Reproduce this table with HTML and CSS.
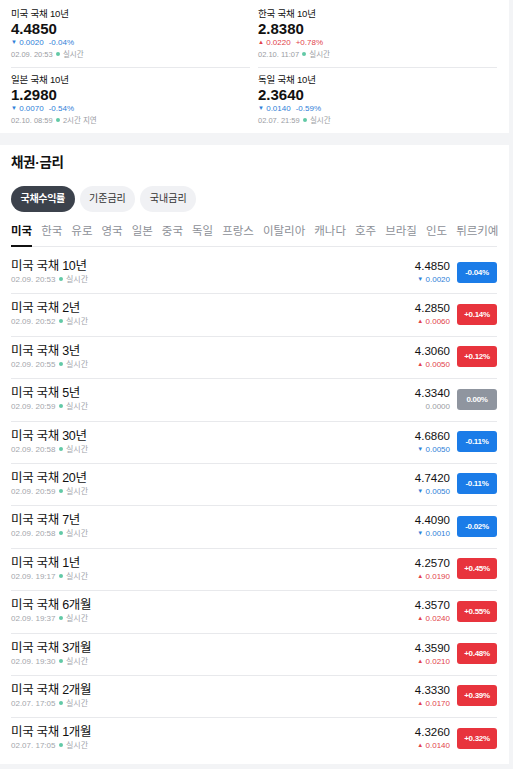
FILE: index.html
```html
<!DOCTYPE html>
<html lang="ko">
<head>
<meta charset="utf-8">
<link rel="stylesheet" href="styles.css">
</head>
<body>
<div class="card top">
  <div class="top-grid">
    <div class="top-item">
      <div class="t-title">미국 국채 10년</div>
      <div class="t-price">4.4850</div>
      <div class="t-chg down"><span class="tri">▼</span> 0.0020<span class="pct">-0.04%</span></div>
      <div class="t-time">02.09. 20:53 <span class="dot"></span> 실시간</div>
    </div>
    <div class="top-item">
      <div class="t-title">한국 국채 10년</div>
      <div class="t-price">2.8380</div>
      <div class="t-chg up"><span class="tri">▲</span> 0.0220<span class="pct">+0.78%</span></div>
      <div class="t-time">02.10. 11:07 <span class="dot"></span> 실시간</div>
    </div>
    <div class="top-item second">
      <div class="t-title">일본 국채 10년</div>
      <div class="t-price">1.2980</div>
      <div class="t-chg down"><span class="tri">▼</span> 0.0070<span class="pct">-0.54%</span></div>
      <div class="t-time">02.10. 08:59 <span class="dot"></span> 2시간 지연</div>
    </div>
    <div class="top-item second">
      <div class="t-title">독일 국채 10년</div>
      <div class="t-price">2.3640</div>
      <div class="t-chg down"><span class="tri">▼</span> 0.0140<span class="pct">-0.59%</span></div>
      <div class="t-time">02.07. 21:59 <span class="dot"></span> 실시간</div>
    </div>
  </div>
</div>
<div class="card main">
  <h2 class="heading">채권·금리</h2>
  <div class="pills">
    <span class="pill active">국채수익률</span>
    <span class="pill">기준금리</span>
    <span class="pill">국내금리</span>
  </div>
  <div class="tabs">
    <span class="tab active">미국</span>
    <span class="tab">한국</span>
    <span class="tab">유로</span>
    <span class="tab">영국</span>
    <span class="tab">일본</span>
    <span class="tab">중국</span>
    <span class="tab">독일</span>
    <span class="tab">프랑스</span>
    <span class="tab">이탈리아</span>
    <span class="tab">캐나다</span>
    <span class="tab">호주</span>
    <span class="tab">브라질</span>
    <span class="tab">인도</span>
    <span class="tab">튀르키예</span>
  </div>
  <ul class="list">
    <li class="row"><div class="r-left"><div class="r-title">미국 국채 10년</div><div class="r-time">02.09. 20:53 <span class="dot"></span> 실시간</div></div><div class="r-right"><div class="r-price">4.4850</div><div class="r-chg down"><span class="tri">▼</span> 0.0020</div></div><span class="badge b-down">-0.04%</span></li>
    <li class="row"><div class="r-left"><div class="r-title">미국 국채 2년</div><div class="r-time">02.09. 20:52 <span class="dot"></span> 실시간</div></div><div class="r-right"><div class="r-price">4.2850</div><div class="r-chg up"><span class="tri">▲</span> 0.0060</div></div><span class="badge b-up">+0.14%</span></li>
    <li class="row"><div class="r-left"><div class="r-title">미국 국채 3년</div><div class="r-time">02.09. 20:55 <span class="dot"></span> 실시간</div></div><div class="r-right"><div class="r-price">4.3060</div><div class="r-chg up"><span class="tri">▲</span> 0.0050</div></div><span class="badge b-up">+0.12%</span></li>
    <li class="row"><div class="r-left"><div class="r-title">미국 국채 5년</div><div class="r-time">02.09. 20:59 <span class="dot"></span> 실시간</div></div><div class="r-right"><div class="r-price">4.3340</div><div class="r-chg flat">0.0000</div></div><span class="badge b-flat">0.00%</span></li>
    <li class="row"><div class="r-left"><div class="r-title">미국 국채 30년</div><div class="r-time">02.09. 20:58 <span class="dot"></span> 실시간</div></div><div class="r-right"><div class="r-price">4.6860</div><div class="r-chg down"><span class="tri">▼</span> 0.0050</div></div><span class="badge b-down">-0.11%</span></li>
    <li class="row"><div class="r-left"><div class="r-title">미국 국채 20년</div><div class="r-time">02.09. 20:59 <span class="dot"></span> 실시간</div></div><div class="r-right"><div class="r-price">4.7420</div><div class="r-chg down"><span class="tri">▼</span> 0.0050</div></div><span class="badge b-down">-0.11%</span></li>
    <li class="row"><div class="r-left"><div class="r-title">미국 국채 7년</div><div class="r-time">02.09. 20:58 <span class="dot"></span> 실시간</div></div><div class="r-right"><div class="r-price">4.4090</div><div class="r-chg down"><span class="tri">▼</span> 0.0010</div></div><span class="badge b-down">-0.02%</span></li>
    <li class="row"><div class="r-left"><div class="r-title">미국 국채 1년</div><div class="r-time">02.09. 19:17 <span class="dot"></span> 실시간</div></div><div class="r-right"><div class="r-price">4.2570</div><div class="r-chg up"><span class="tri">▲</span> 0.0190</div></div><span class="badge b-up">+0.45%</span></li>
    <li class="row"><div class="r-left"><div class="r-title">미국 국채 6개월</div><div class="r-time">02.09. 19:37 <span class="dot"></span> 실시간</div></div><div class="r-right"><div class="r-price">4.3570</div><div class="r-chg up"><span class="tri">▲</span> 0.0240</div></div><span class="badge b-up">+0.55%</span></li>
    <li class="row"><div class="r-left"><div class="r-title">미국 국채 3개월</div><div class="r-time">02.09. 19:30 <span class="dot"></span> 실시간</div></div><div class="r-right"><div class="r-price">4.3590</div><div class="r-chg up"><span class="tri">▲</span> 0.0210</div></div><span class="badge b-up">+0.48%</span></li>
    <li class="row"><div class="r-left"><div class="r-title">미국 국채 2개월</div><div class="r-time">02.07. 17:05 <span class="dot"></span> 실시간</div></div><div class="r-right"><div class="r-price">4.3330</div><div class="r-chg up"><span class="tri">▲</span> 0.0170</div></div><span class="badge b-up">+0.39%</span></li>
    <li class="row"><div class="r-left"><div class="r-title">미국 국채 1개월</div><div class="r-time">02.07. 17:05 <span class="dot"></span> 실시간</div></div><div class="r-right"><div class="r-price">4.3260</div><div class="r-chg up"><span class="tri">▲</span> 0.0140</div></div><span class="badge b-up">+0.32%</span></li>
  </ul>
</div>
</body>
</html>
```
FILE: styles.css
```css
* { box-sizing: border-box; }
html, body {
  margin: 0;
  padding: 0;
  background: #f3f4f6;
}
body {
  font-family: "Liberation Sans", "Noto Sans CJK KR", sans-serif;
  color: #111;
  width: 513px;
}
.card {
  width: 509px;
  background: #fff;
  padding: 0 12px 0 11px;
}
.top { padding-bottom: 0; }
.main { margin-top: 12px; padding-top: 8px; padding-bottom: 4px; }

.top-grid {
  display: grid;
  grid-template-columns: 1fr 1fr;
  column-gap: 8px;
}
.top-item {
  padding: 6px 0 6px;
  border-bottom: 1px solid #e8e9ec;
}
.top-item.second {
  border-bottom: none;
  padding-top: 4px;
}
.t-title {
  font-size: 9.5px;
  line-height: 15px;
  color: #111;
  letter-spacing: -0.2px;
}
.t-price {
  font-size: 15px;
  font-weight: bold;
  line-height: 15px;
  color: #111;
}
.t-chg {
  font-size: 8px;
  line-height: 12px;
}
.t-chg .pct { margin-left: 5px; }
.t-time {
  font-size: 7.5px;
  line-height: 12px;
  color: #9a9da3;
}
.tri { font-size: 6px; vertical-align: 1px; }
.down { color: #2f7fd8; }
.up { color: #e2434b; }
.flat { color: #9a9da3; }
.dot {
  display: inline-block;
  width: 4px;
  height: 4px;
  border-radius: 50%;
  background: #62c9a6;
  vertical-align: 1px;
  margin: 0 1px;
}

.heading {
  margin: 0;
  font-size: 13.5px;
  font-weight: bold;
  line-height: 20px;
  color: #111;
  letter-spacing: -0.3px;
}
.pills {
  display: flex;
  gap: 5px;
  margin-top: 13px;
}
.pill {
  height: 26px;
  line-height: 26px;
  padding: 0 9.5px;
  border-radius: 13px;
  font-size: 10px;
  background: #f0f1f4;
  color: #333;
}
.pill.active {
  background: #3c424c;
  color: #fff;
  font-weight: bold;
  letter-spacing: -0.3px;
}
.tabs {
  display: flex;
  gap: 9px;
  margin-top: 12px;
  border-bottom: 1px solid #e8e9ec;
  white-space: nowrap;
}
.tab {
  font-size: 11.5px;
  line-height: 15px;
  padding-bottom: 6px;
  border-bottom: 2px solid transparent;
  margin-bottom: -1px;
  color: #8d9097;
}
.tab.active {
  color: #111;
  font-weight: bold;
  border-bottom-color: #111;
}
.list {
  list-style: none;
  margin: 5px 0 0;
  padding: 0;
}
.row {
  display: flex;
  align-items: center;
  padding: 7px 0 8.4px;
  border-bottom: 1px solid #e8e9ec;
}
.row:last-child { border-bottom: none; }
.r-left { flex: 1; }
.r-title {
  font-size: 12.5px;
  line-height: 15px;
  color: #111;
  letter-spacing: -0.3px;
}
.r-time {
  font-size: 8px;
  line-height: 11px;
  color: #a3a6ac;
}
.r-right { text-align: right; }
.r-price {
  font-size: 11.5px;
  line-height: 15px;
  color: #111;
}
.r-chg {
  font-size: 8px;
  line-height: 11px;
}
.badge {
  width: 40px;
  height: 21px;
  line-height: 21px;
  margin-left: 7px;
  border-radius: 3px;
  color: #fff;
  font-size: 8px;
  font-weight: bold;
  text-align: center;
  letter-spacing: -0.3px;
}
.b-down { background: #1b7ce8; }
.b-up { background: #e8343d; }
.b-flat { background: #8f959f; }
```
